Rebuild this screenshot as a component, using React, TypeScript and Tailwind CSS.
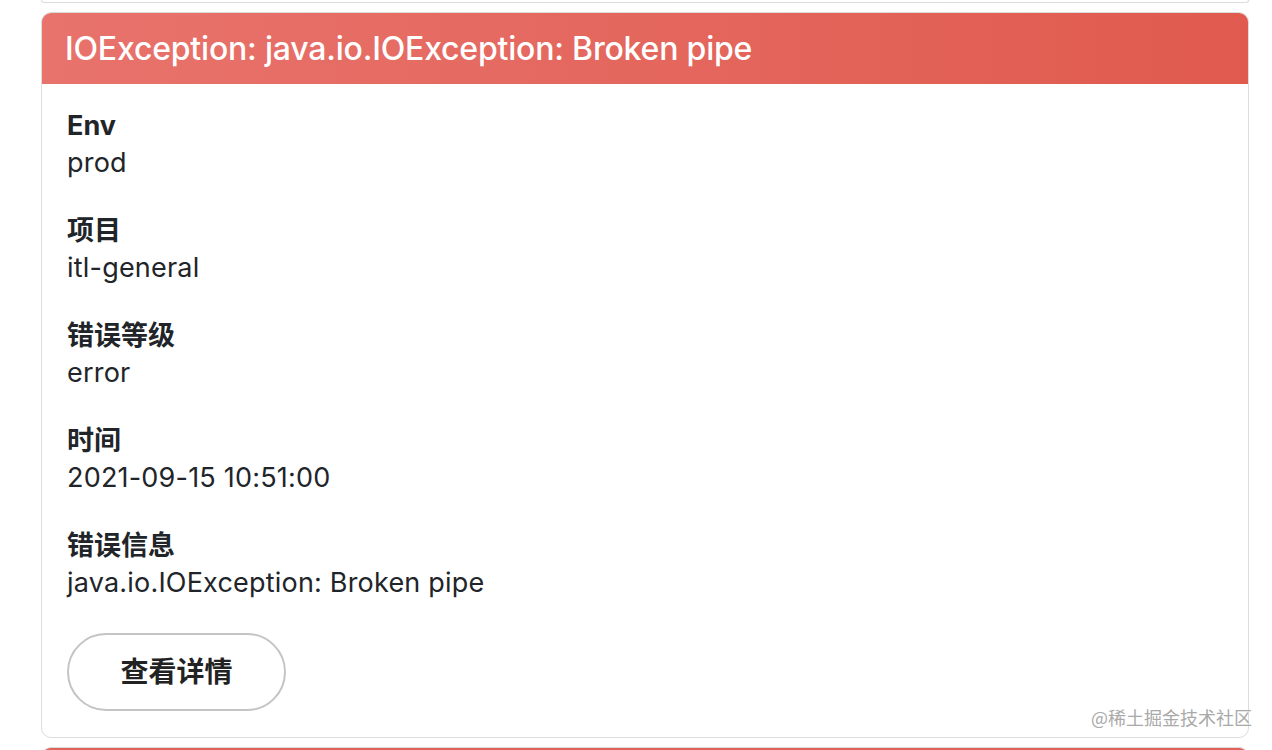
import React from "react";

const fields: [string, string][] = [
  ["Env", "prod"],
  ["项目", "itl-general"],
  ["错误等级", "error"],
  ["时间", "2021-09-15 10:51:00"],
  ["错误信息", "java.io.IOException: Broken pipe"],
];

export default function App() {
  return (
    <div
      className="relative h-[750px] w-[1272px] overflow-hidden bg-white text-[#212529]"
      style={{ fontFamily: 'Inter, "Noto Sans CJK SC", sans-serif' }}
    >
      <div className="flex flex-col gap-[9px] pl-[41px] pr-[23px]">
        <div className="h-[3px] rounded-b-[10px] border-x border-b border-[#dcdcdc]" />
        <div className="overflow-hidden rounded-[10px] border border-[#dcdcdc]">
          <div className="flex h-[71px] items-center bg-gradient-to-r from-[#e8736c] to-[#e05a4f] pl-[23px]">
            <span className="text-[32px] font-medium tracking-[-0.2px] text-white">
              IOException: java.io.IOException: Broken pipe
            </span>
          </div>
          <div className="flex flex-col pl-[25px] pt-[25px] pb-[26px]">
            <div className="flex flex-col gap-[31px]">
              {fields.map(([k, v]) => (
                <div key={k} className="flex flex-col text-[27px]">
                  <span className="font-bold leading-[34px]">{k}</span>
                  <span className="leading-[40px] tracking-[0.2px]">{v}</span>
                </div>
              ))}
            </div>
            <button className="mt-[30px] h-[78px] w-[219px] rounded-full border-2 border-[#c4c4c4] bg-white text-[28px] font-semibold text-[#222]">
              查看详情
            </button>
          </div>
        </div>
        <div className="h-[20px] rounded-t-[10px] border-x border-t border-[#dcdcdc] bg-[#e0625a]" />
      </div>
      <div
        className="absolute right-[20px] top-[704px] text-[18px] text-[#a9a9a9]"
        style={{ fontFamily: '"Noto Sans CJK SC", sans-serif' }}
      >
        @稀土掘金技术社区
      </div>
    </div>
  );
}
